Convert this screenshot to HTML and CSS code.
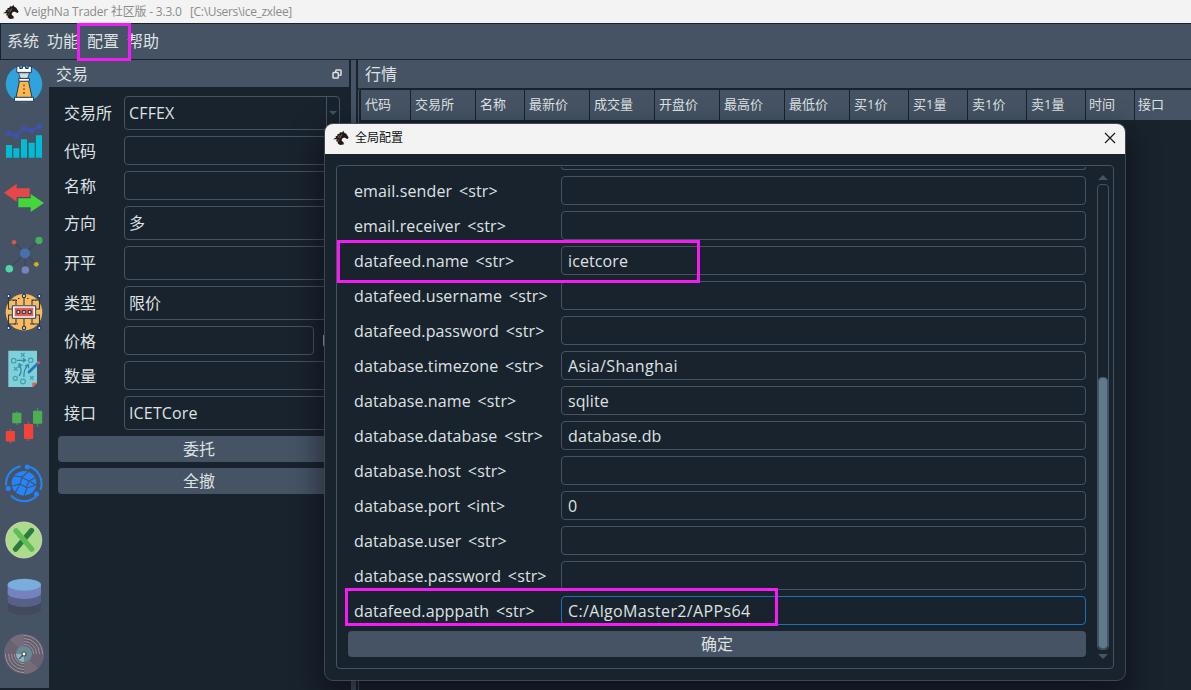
FILE: index.html
```html
<!DOCTYPE html>
<html lang="zh-CN">
<head>
<meta charset="utf-8">
<title>VeighNa Trader</title>
<link rel="stylesheet" href="styles.css">
</head>
<body>
<svg width="0" height="0" class="defs"><defs>
<symbol id="knight" viewBox="0 0 16 16"><path d="M0 9.3 3 7.4 2.5 6.5 4.6 5.5 4.3 4.2 6.5 3.7 6.8 2.2 9 2.4 10.6.8 11 2.4 13.2 3.8 15.6 7.6 14.8 9 13.3 8.6 11.2 7.6 9 8.8 8.6 10.6 10.8 12.8 10.6 14.6 6.9 14.9 4.4 13 5.2 11.8 3 11.3 4 9.3z"/><path d="M6.5 5.3 4.8 7.8M8.8 4.4 6.8 8.4M4.8 9.6l1.4 1" stroke="#aaa" stroke-width=".6" fill="none"/></symbol>
</defs></svg>
<div class="window">
  <header class="titlebar"><svg class="logo"><use href="#knight"/></svg><span class="app-name">VeighNa Trader 社区版 - 3.3.0</span><span class="app-path">[C:\Users\ice_zxlee]</span></header>
  <nav class="menubar"><span>系统</span><span>功能</span><span>配置</span><span>帮助</span></nav>
  <div class="workspace">
    <aside class="toolbar">
      <svg viewBox="0 0 40 40"><circle cx="20" cy="20" r="18.3" fill="#30a2dc"/><path d="M15.5 17h9l3.5 16.5H12z" fill="#fbb64c" stroke="#263a55"/><path d="M12.8 2.2h3v2.3h2.6V2.2h3.2v2.3h2.6V2.2h3.2v6.2H12.8z" fill="#fff" stroke="#263a55"/><path d="M14.5 8.8h11l-2 6.2h-7z" fill="#d4dadd" stroke="#263a55" stroke-width=".8"/><path d="M14.8 14.4h10.6v2.8H14.8zM10.5 33.3h19v4h-19z" fill="#fff" stroke="#263a55"/><path d="M20 20.5v10" stroke="#7a603a" stroke-width="1.6" stroke-dasharray="1.8 2"/></svg>
      <svg viewBox="0 0 40 40"><path d="M2 24h6v12.8H2zM9.3 27.3h6v9.5h-6zM17 18.2h6v18.6h-6zM24.7 21.8h6v15h-6zM32 14.2h6v22.6h-6z" fill="#00bcd4"/><path d="M5 12.5 12.7 14.7 20 7.7 27.7 9.7 35.3 5.7" fill="none" stroke="#3f51b5" stroke-width="2"/><g fill="#3f51b5"><circle cx="5" cy="12.5" r="2.7"/><circle cx="12.7" cy="14.7" r="2.7"/><circle cx="20" cy="7.7" r="2.7"/><circle cx="27.7" cy="9.7" r="2.7"/><circle cx="35.3" cy="5.7" r="2.7"/></g></svg>
      <svg viewBox="0 0 40 40"><path d="M14.3 20.3h12.4V16L40 25 26.7 34v-4.7H14.3z" fill="#45d63b"/><path d="M0 14.7 12.7 5.7v4.6h13V19h-13v4.7z" fill="#e44848"/></svg>
      <svg viewBox="0 0 40 40"><path d="M10 7.3 32.3 29.3M35 5.3 5.3 33.7M21 18v17" stroke="#3c475b" stroke-width="1.2"/><circle cx="21" cy="18.4" r="5" fill="#4a6fae"/><circle cx="10" cy="7.3" r="2.2" fill="#dc584d"/><circle cx="35" cy="5.4" r="3.6" fill="#43b05c"/><circle cx="5.3" cy="33.7" r="3.8" fill="#4ed6a5"/><circle cx="21.3" cy="35" r="3.8" fill="#7882bd"/><circle cx="32.3" cy="29.3" r="2.4" fill="#d9ab22"/></svg>
      <svg viewBox="0 0 40 40"><circle cx="20" cy="20.2" r="18.3" fill="#fcbb5b"/><path d="M20 5.5V13M20 27v8M12 13V8H6M28 13V8h6M12 27v5H6M28 27v5h6M8 17H4.5V6M8 23H4.5v11M32 17h3.5V6M32 23h3.5v11" fill="none" stroke="#243b56" stroke-width="1.1"/><path d="M9 8.5h4m1-2h3m6 0h3m2 2h4M10 32h4m12 0h4" stroke="#243b56" stroke-dasharray="1.5 1.5"/><path d="M8.3 13.8h23.4v12.5H8.3z" fill="#fff" stroke="#243b56" stroke-width="1"/><path d="M10.7 15.7h18.6v8.6H10.7z" fill="#ee5a48"/><g fill="#fff" stroke="#243b56" stroke-width="1.3"><circle cx="14.3" cy="20" r="1.6"/><circle cx="20" cy="20" r="1.6"/><circle cx="25.7" cy="20" r="1.6"/><circle cx="4.5" cy="4" r="1.6"/><circle cx="20" cy="4" r="1.6"/><circle cx="35.4" cy="4" r="1.6"/><circle cx="4.5" cy="36" r="1.6"/><circle cx="20" cy="36" r="1.6"/><circle cx="35.4" cy="36" r="1.6"/></g></svg>
      <svg viewBox="0 0 40 40"><path d="M4.3 1.7H33V34L29 38H4.3z" fill="#7fd0d8"/><path d="M33 33.7 29.2 38h-.8v-4.3z" fill="#ef5350"/><g fill="none" stroke="#459bb3" stroke-width="1.2"><circle cx="9.7" cy="11.7" r="2.3"/><circle cx="26.7" cy="11.3" r="2.2"/><circle cx="11.3" cy="29.3" r="2"/><circle cx="19" cy="32.5" r="2.4"/><path d="m17 4 3.6 3.8m0-3.8L17 7.8M10 18l3.5 3.6m0-3.6L10 21.6M26 27l3.5 3.6m0-3.6L26 30.6"/></g><path d="M13 11.3h8m-2-2 2.5 2-2.5 2M15 27c4-5 2-9 0-12m0 4v-4l3.5 1.5M20 28c-.5-6 1-9 4-12m-3 1 3.4-1.6.2 4" fill="none" stroke="#3489ad" stroke-width="1.3"/><path d="M25 23 34 14.3" stroke="#2878b6" stroke-width="2.8" stroke-linecap="round"/><path d="m33.5 12.2 2.4 2.2" stroke="#ef5350" stroke-width="2"/></svg>
      <svg viewBox="0 0 40 40"><path d="M12.8 5v14M33.5 2v19M6.5 23v14.5M24.5 15.8V35" stroke="#65747d" stroke-width="1.3"/><g fill="#4caf50"><rect x="8.2" y="6.8" width="9.2" height="10.4" rx="1"/><rect x="29" y="4.7" width="9.2" height="13" rx="1"/></g><g fill="#f44336"><rect x="1.8" y="25" width="9.2" height="10.4" rx="1"/><rect x="20" y="18" width="9.2" height="15" rx="1"/></g></svg>
      <svg viewBox="0 0 40 40"><circle cx="20" cy="20.3" r="12.4" fill="#2484fb"/><path d="m10 13 8 1 7-6m-7 6-2 7-8 2m8-2 7 4 9-3m-9 3-3 8m-4-12-5 9m6-16 8 4 6-3m-6 3-3 7m3-7 7 4m-20 9 8 3 7-3" fill="none" stroke="#455364" stroke-width="1.1"/><path d="M2.2 22A17.6 17.6 0 0 1 16 3.4M23.5 3.2A17.6 17.6 0 0 1 36.6 26M32 33.5A17.6 17.6 0 0 1 7.5 33" fill="none" stroke="#2484fb" stroke-width="2" stroke-linecap="round"/><g fill="#2484fb"><circle cx="23.3" cy="3.9" r="2.5"/><circle cx="4.3" cy="25.5" r="2.5"/><circle cx="32.5" cy="31" r="2.5"/></g></svg>
      <svg viewBox="0 0 40 40"><circle cx="19.8" cy="20" r="18" fill="#addb8c" stroke="#d1dccb" stroke-width=".8"/><path d="m27.5 10.5-16 18.8" stroke="#2b7b3c" stroke-width="5.2" stroke-linecap="round"/><path d="m12 10.8 15.8 18.4" stroke="#60bd56" stroke-width="5.2" stroke-linecap="round"/></svg>
      <svg viewBox="0 0 40 40"><path d="M3.6 22v10a16.7 6 0 0 0 33.4 0V22z" fill="#434a5e"/><path d="M3.6 14v10a16.7 6 0 0 0 33.4 0V14z" fill="#566187"/><path d="M3.6 7.7V16a16.7 6 0 0 0 33.4 0V7.7z" fill="#7582bf"/><ellipse cx="20.3" cy="7.8" rx="16.7" ry="6" fill="#7aaddc"/></svg>
      <svg viewBox="0 0 40 40"><circle cx="20" cy="20" r="20" fill="#625c6b"/><path d="M20 20V0A20 20 0 0 0 5.8 5.8zM20 20v20a20 20 0 0 0 14.2-5.8z" fill="#766b79"/><path d="M20 20 5.8 5.8A20 20 0 0 0 0 20zM20 20l14.2 14.2A20 20 0 0 0 40 20z" fill="#6a6272"/><path d="M20 1.5A18.5 18.5 0 0 1 38.5 20M20 4.5A15.5 15.5 0 0 1 35.5 20M20 7.5A12.5 12.5 0 0 1 32.5 20M20 10.3a9.7 9.7 0 0 1 9.7 9.7M20 38.5A18.5 18.5 0 0 1 1.5 20M20 35.5A15.5 15.5 0 0 1 4.5 20M20 32.5A12.5 12.5 0 0 1 7.5 20M20 29.7A9.7 9.7 0 0 1 10.3 20" fill="none" stroke="#a59ca7" stroke-width=".9"/><circle cx="20" cy="20" r="8" fill="#668a94"/><path d="M20 20v8a8 8 0 0 1-8-8z" fill="#8eb6bf"/><path d="m20 20-5 5" stroke="#4b6370" stroke-width="1.4"/><circle cx="20" cy="20" r="2" fill="#fff" stroke="#544e59" stroke-width="1.2"/></svg>
    </aside>
    <section class="trade">
      <div class="dock-title">交易<svg class="float" viewBox="0 0 10 10"><path d="M3.7 3V1.8Q3.7 1 4.5 1H8.2Q9 1 9 1.8V5.4Q9 6.2 8.2 6.2H7.3M1.8 3.6H5.4Q6.3 3.6 6.3 4.5V8.2Q6.3 9 5.4 9H1.8Q1 9 1 8.2V4.5Q1 3.6 1.8 3.6z"/></svg></div>
      <div class="form">
        <div class="row tall"><label>交易所</label><div class="field combo">CFFEX<i class="drop"></i></div></div>
        <div class="row"><label>代码</label><div class="field"></div></div>
        <div class="row"><label>名称</label><div class="field"></div></div>
        <div class="row tall"><label>方向</label><div class="field">多</div></div>
        <div class="row tall"><label>开平</label><div class="field"></div></div>
        <div class="row tall"><label>类型</label><div class="field">限价</div></div>
        <div class="row"><label>价格</label><div class="field"></div><i class="check"></i></div>
        <div class="row"><label>数量</label><div class="field"></div></div>
        <div class="row tall"><label>接口</label><div class="field combo">ICETCore</div></div>
        <div class="button">委托</div>
        <div class="button">全撤</div>
      </div>
    </section>
    <div class="splitter"></div>
    <section class="market">
      <div class="dock-title">行情</div>
      <div class="table"><div class="thead">
        <span>代码</span><span>交易所</span><span>名称</span><span>最新价</span><span>成交量</span><span>开盘价</span><span>最高价</span><span>最低价</span><span>买1价</span><span>买1量</span><span>卖1价</span><span>卖1量</span><span>时间</span><span>接口</span>
      </div></div>
    </section>
  </div>
</div>
<div class="dialog">
  <div class="dialog-title"><svg class="logo"><use href="#knight"/></svg><span>全局配置</span><svg class="close" viewBox="0 0 12 12"><path d="m1 1 10 10M11 1 1 11"/></svg></div>
  <div class="dialog-body">
    <div class="settings">
      <div class="peek"></div>
      <div class="setting"><label>email.sender &lt;str&gt;</label><div class="input"></div></div>
      <div class="setting"><label>email.receiver &lt;str&gt;</label><div class="input"></div></div>
      <div class="setting"><label>datafeed.name &lt;str&gt;</label><div class="input">icetcore</div></div>
      <div class="setting"><label>datafeed.username &lt;str&gt;</label><div class="input"></div></div>
      <div class="setting"><label>datafeed.password &lt;str&gt;</label><div class="input"></div></div>
      <div class="setting"><label>database.timezone &lt;str&gt;</label><div class="input spaced">Asia/Shanghai</div></div>
      <div class="setting"><label>database.name &lt;str&gt;</label><div class="input">sqlite</div></div>
      <div class="setting"><label>database.database &lt;str&gt;</label><div class="input">database.db</div></div>
      <div class="setting"><label>database.host &lt;str&gt;</label><div class="input"></div></div>
      <div class="setting"><label>database.port &lt;int&gt;</label><div class="input">0</div></div>
      <div class="setting"><label>database.user &lt;str&gt;</label><div class="input"></div></div>
      <div class="setting"><label>database.password &lt;str&gt;</label><div class="input"></div></div>
      <div class="setting"><label>datafeed.apppath &lt;str&gt;</label><div class="input spaced focused">C:/AlgoMaster2/APPs64</div></div>
      <div class="button">确定</div>
    </div>
    <div class="scrollbar"><i class="arrow up"></i><div class="track"><div class="thumb"></div></div><i class="arrow down"></i></div>
  </div>
</div>
<div class="mark mark-menu"></div>
<div class="mark mark-name"></div>
<div class="mark mark-path"></div>
</body>
</html>
```
FILE: styles.css
```css
* { box-sizing: border-box; }
body {
  margin: 0;
  width: 1191px;
  height: 690px;
  overflow: hidden;
  position: relative;
  background: #19232d;
  color: #dfe1e2;
  font: 16px/20px "Open Sans", "Noto Sans CJK SC", sans-serif;
  white-space: nowrap;
}
svg { display: block; flex: none; }
.defs { position: absolute; }
.window { display: flex; flex-direction: column; height: 690px; }
.titlebar {
  display: flex;
  align-items: center;
  height: 23px;
  padding-left: 3px;
  background: #f3f3f3;
  color: #8b8b8b;
  font-size: 12px;
  line-height: 16px;
}
.logo { width: 16px; height: 16px; fill: #231815; }
.app-name { margin-left: 5px; width: 166px; letter-spacing: -0.2px; }
.app-path { letter-spacing: -0.32px; }
.menubar {
  display: flex;
  align-items: center;
  gap: 8px;
  height: 37px;
  padding: 0 0 2px 6px;
  background: #455364;
  border: 1px solid #19232d;
  border-right: 0;
}
.menubar span { width: 32px; }
.workspace { display: flex; flex: 1; }
.toolbar {
  display: flex;
  flex-direction: column;
  gap: 17px;
  width: 49px;
  height: 628px;
  padding: 4px 0 0 4px;
  background: #455364;
}
.toolbar svg { width: 40px; height: 40px; }
.trade { width: 300px; margin-right: 2px; }
.dock-title {
  display: flex;
  align-items: center;
  justify-content: space-between;
  height: 27px;
  padding: 1px 7px 0;
  background: #455364;
}
.float { width: 10px; height: 10px; fill: none; stroke: #dfe1e2; stroke-width: 1.5; }
.form { display: flex; flex-direction: column; gap: 6px; padding: 9px 9px 0; }
.row { display: flex; align-items: center; height: 29px; }
.row.tall { height: 34px; }
.row label { width: 66px; padding-left: 6px; }
.field {
  flex: 1;
  height: 100%;
  display: flex;
  align-items: center;
  padding-left: 4px;
  border: 1px solid #455364;
  border-radius: 4px;
}
.combo { justify-content: space-between; letter-spacing: 0.15px; }
.drop { width: 13px; height: 100%; border-left: 1px solid #455364; display: flex; align-items: center; justify-content: center; }
.drop::after { content: ""; border: 4px solid transparent; border-bottom: 0; border-top-color: #455364; }
.check { width: 17px; height: 13px; margin-left: 9px; border: 1px solid #9da9b5; border-radius: 2px; }
.button {
  height: 26px;
  border-radius: 4px;
  background: #455364;
  display: flex;
  align-items: center;
  justify-content: center;
}
.splitter { width: 5px; background: #455364; margin-right: 2px; }
.market { flex: 1; display: flex; flex-direction: column; }
.market .dock-title { height: 28px; padding-top: 0; }
.table { flex: 1; padding: 2px 0 0 2px; border: 1px solid #455364; border-width: 0 0 0 1px; border-radius: 4px 0 0; }
.thead {
  display: grid;
  grid-template-columns: 50px 65px 49px 65px 65px 65px 65px 65px 59px 59px 59px 59px 49px 1fr;
  height: 30px;
  font-size: 13px;
  line-height: 29px;
  background: #455364;
}
.thead span { padding-left: 4px; border-right: 1px solid #19232d; }
.thead span:nth-child(13), .thead span:nth-child(14) { padding-left: 3px; }
.thead span:last-child { border: 0; }
.dialog {
  position: absolute;
  left: 324px;
  top: 123px;
  width: 802px;
  height: 558px;
  border: 1px solid #42474c;
  border-radius: 9px;
  overflow: hidden;
  background: #19232d;
  box-shadow: 0 12px 28px 4px rgba(8, 4, 14, .5);
}
.dialog-title {
  display: flex;
  align-items: center;
  height: 30px;
  padding: 0 9px 2px 8px;
  background: #f3f3f3;
  color: #111;
  font-size: 12px;
}
.dialog-title span { flex: 1; margin-left: 6px; }
.close { width: 12px; height: 12px; stroke: #1a1a1a; stroke-width: 1.2; }
.dialog-body {
  display: flex;
  justify-content: space-between;
  height: 504px;
  margin: 11px 11px 0;
  padding: 0 4px 0 11px;
  border: 1px solid #455364;
  border-radius: 4px;
}
.settings { width: 738px; display: flex; flex-direction: column; gap: 6px; padding-top: 1px; }
.peek { height: 3px; margin-left: 213px; border: 1px solid #455364; border-top: 0; border-radius: 0 0 3px 3px; }
.setting { display: flex; align-items: center; height: 29px; }
.setting label { width: 213px; padding-left: 6px; letter-spacing: 0.12px; word-spacing: 2.5px; }
.input {
  flex: 1;
  height: 29px;
  padding-left: 6px;
  border: 1px solid #455364;
  border-radius: 4px;
  line-height: 28px;
  letter-spacing: 0.1px;
}
.spaced { letter-spacing: 0.35px; }
.input.focused { border-color: #1a72bb; }
.scrollbar { width: 12px; display: flex; flex-direction: column; align-items: center; padding-top: 9px; gap: 4px; }
.arrow { border: 5px solid transparent; }
.arrow.up { border-top: 0; border-bottom-color: #455364; }
.arrow.down { border-bottom: 0; border-top-color: #455364; }
.track { width: 12px; height: 466px; display: flex; align-items: flex-end; border: 1px solid #455364; border-radius: 4px; }
.thumb { width: 10px; height: 272px; background: #60798b; border: 1px solid #455364; border-radius: 4px; }
.mark { position: absolute; border: 3px solid #f41cf4; }
.mark-menu { left: 77px; top: 23px; width: 54px; height: 38px; }
.mark-name { left: 337px; top: 240px; width: 363px; height: 43px; }
.mark-path { left: 345px; top: 588px; width: 433px; height: 38px; }
```
